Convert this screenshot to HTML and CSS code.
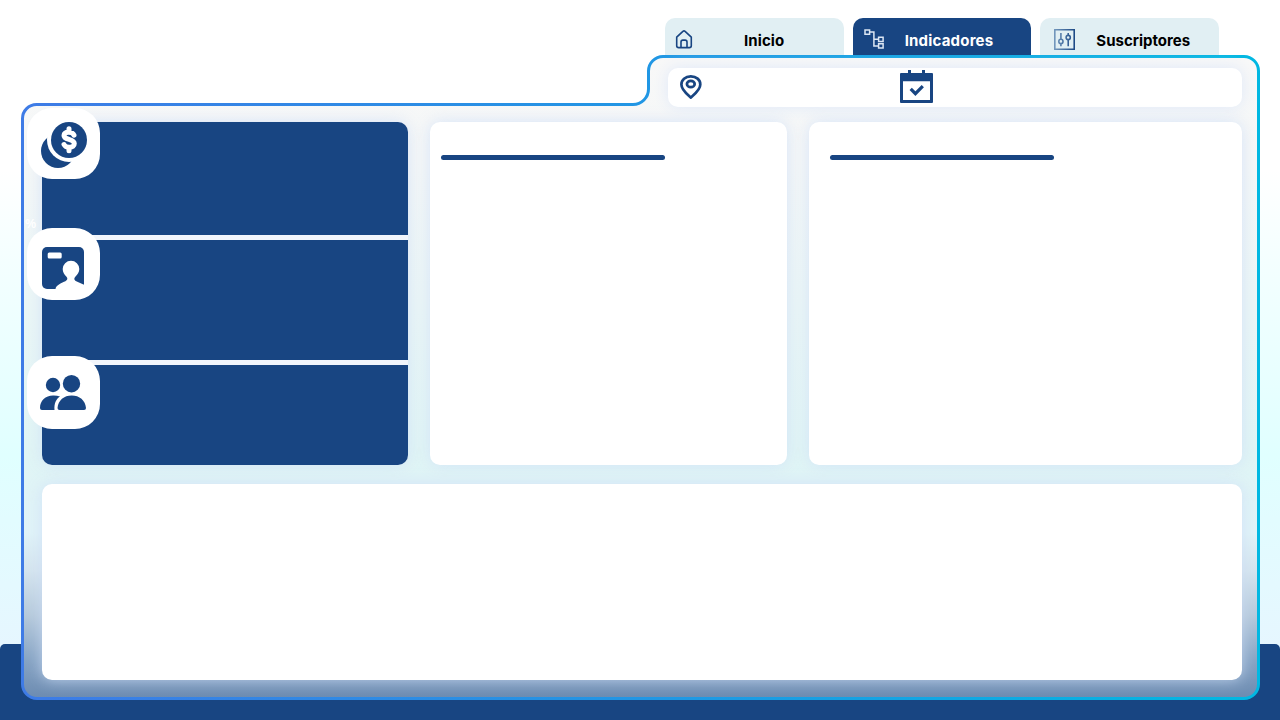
FILE: index.html
```
<!DOCTYPE html>
<html lang="es">
<head>
<meta charset="utf-8">
<title>Indicadores</title>
<link rel="stylesheet" href="styles.css">
</head>
<body>
<div class="page">
  <div class="footer-band"></div>
  <svg class="frame" width="1280" height="720" viewBox="0 0 1280 720" fill="none">
    <defs>
      <linearGradient id="edge" x1="21" y1="0" x2="1260" y2="0" gradientUnits="userSpaceOnUse">
        <stop offset="0" stop-color="#3e7be6"/><stop offset=".5" stop-color="#2196e4"/><stop offset="1" stop-color="#00b8e2"/>
      </linearGradient>
      <linearGradient id="glass" x1="0" y1="55" x2="0" y2="700" gradientUnits="userSpaceOnUse">
        <stop offset="0" stop-color="#f8f8f8"/><stop offset=".16" stop-color="#f5f7f7"/><stop offset=".62" stop-color="#e0f5f5"/><stop offset=".74" stop-color="#e0f3f8"/><stop offset=".8" stop-color="#d4e4ee"/><stop offset=".87" stop-color="#b5c9db"/><stop offset=".94" stop-color="#86a3c3"/><stop offset="1" stop-color="#6b8ab0"/>
      </linearGradient>
    </defs>
    <path d="M36.500 104.500H633a15.500 15.500 0 0 0 15.500-15.500V71a14.500 14.500 0 0 1 14.500-14.500H1244a14.500 14.500 0 0 1 14.500 14.500V684a14.500 14.500 0 0 1-14.500 14.500H37a14.500 14.500 0 0 1-14.500-14.500V118.500a14 14 0 0 1 14-14Z" fill="url(#glass)" stroke="url(#edge)" stroke-width="3"/>
  </svg>

  <nav class="tabs">
    <a class="tab">
      <svg class="tab-icon home" width="18" height="20" viewBox="0 0 18 20" fill="none" stroke="#184582" stroke-width="1.600" stroke-linejoin="round"><path d="M1.700 7.200 7.900 1.300Q9 .4 10.100 1.300L16.300 7.200V15.700Q16.300 17.600 14.300 17.600H3.700Q1.700 17.600 1.700 15.700Z"/><path d="M6 17.400V12Q6 10.100 7.900 10.100H10.100Q12 10.100 12 12V17.400"/></svg>
      <span class="label">Inicio</span>
    </a>
    <a class="tab active">
      <svg class="tab-icon tree" width="21" height="21" viewBox="0 0 21 21" fill="none" stroke="#dce6f3" stroke-width="1.500"><path d="M1 1.100h4.600v4.200H1ZM14.600 8.200h4.500v4.200h-4.500ZM14.600 14.800h4.500v4.200h-4.500ZM5.600 3.100h4.300v13.800h4.700M9.900 10.300h4.700"/></svg>
      <span class="label">Indicadores</span>
    </a>
    <a class="tab">
      <svg class="tab-icon sliders" width="22" height="22" viewBox="0 0 22 22" fill="none" stroke="url(#fade)" stroke-width="1.600">
        <defs><linearGradient id="fade" x1="0" y1="0" x2="22" y2="0" gradientUnits="userSpaceOnUse"><stop stop-color="#7398bd"/><stop offset="1" stop-color="#184582"/></linearGradient></defs>
        <path d="M.8 .8h19.400v19.400H.8ZM6.900 4v6.200M6.900 14.500V17.200M14.200 4v2.200M14.200 10.700v6.500"/><circle cx="6.900" cy="12.400" r="2.100"/><circle cx="14.200" cy="8.500" r="2.100"/>
      </svg>
      <span class="label">Suscriptores</span>
    </a>
  </nav>

  <div class="filters">
    <svg class="pin" width="22" height="24" viewBox="0 0 22 24" fill="none" stroke="#184582" stroke-width="2.700"><path d="M10.800 22.500C8.500 20.200 1.400 15.300 1.400 9.500 1.400 4.700 5.300 1.400 10.800 1.400S20.300 4.700 20.300 9.500C20.300 15.300 13.100 20.200 10.800 22.500Z"/><ellipse cx="10.800" cy="9" rx="3.900" ry="3.200"/></svg>
    <svg class="calendar" width="33" height="33" viewBox="0 0 33 33"><path fill="#184582" fill-rule="evenodd" d="M0 4Q0 3 1 3H8V0H11V3H22V0H25V3H32Q33 3 33 4V32Q33 33 32 33H1Q0 33 0 32ZM3 11.300V30H30V11.300Z"/><path d="m10.700 18.800 4.700 4.800 7.400-7.500" fill="none" stroke="#184582" stroke-width="3.200"/></svg>
  </div>

  <main class="content">
    <section class="metrics">
      <div class="metric first">
        <div class="badge coins"><svg width="46" height="46" viewBox="0 0 46 46"><circle cx="17" cy="29" r="17" fill="#184582"/><circle cx="28" cy="18" r="22" fill="#fff"/><circle cx="28" cy="18" r="18" fill="#184582"/><path d="M33 13.200C31.600 9.300 23.400 8.900 23 13.400 22.600 18.300 33.300 16.500 33.300 21.500 33.300 26.300 25 26.500 23 22.500M28 6.800V10M28 25.500V28.800" fill="none" stroke="#fff" stroke-width="5" stroke-linecap="round"/></svg></div>
        <span class="percent">%</span>
      </div>
      <div class="metric second">
        <div class="badge contact"><svg width="42" height="42" viewBox="0 0 42 42"><rect width="42" height="42" rx="5" fill="#184582"/><rect x="5.700" y="5.500" width="14" height="6" rx="1.500" fill="#fff"/><path d="M13.500 42C14 37.800 20 35.800 23.400 34.200 25.900 33 25.800 31.300 24.300 29.600 22.400 27.600 20.700 25.200 20.700 22A8.300 8.300 0 0 1 37.300 22C37.300 25.200 35.400 27.600 33.500 29.600 32 31.300 31.700 33 34.200 34.200L42 37.700V42Z" fill="#fff"/></svg></div>
      </div>
      <div class="metric third">
        <div class="badge people"><svg width="46" height="35" viewBox="0 0 46 35" fill="#184582"><circle cx="13" cy="10" r="7.200"/><circle cx="31.500" cy="8.700" r="8.700"/><path d="M2 35Q0 35 0 33C0 25.500 5.500 20.500 13 20.500Q17 20.400 20 21.500C16 24 14 28.500 14.500 35ZM19.500 35Q17.500 35 17.500 33C18.200 25.300 24 20.500 31.700 20.500S45.400 25.300 46 33Q46 35 44 35Z"/></svg></div>
      </div>
    </section>
    <section class="card"><div class="rule"></div></section>
    <section class="card wide"><div class="rule"></div></section>
    <section class="card bottom"></section>
  </main>
</div>
</body>
</html>
```
FILE: styles.css
```
* { box-sizing: border-box; }
body { margin: 0; font-family: Inter, "Noto Sans", sans-serif; }
.page {
  position: relative;
  isolation: isolate;
  width: 1280px;
  height: 720px;
  overflow: hidden;
  background: linear-gradient(180deg, #fff 0, #fff 170px, #f3ffff 270px, #e0ffff 455px, #e6f6ff 650px);
}
.footer-band {
  position: absolute;
  z-index: -2;
  left: 0; right: 0; bottom: 0;
  height: 76px;
  border-radius: 5px 5px 0 0;
  background: #184582;
}
.frame { position: absolute; z-index: -1; inset: 0; }

.tabs { display: flex; gap: 9px; height: 55px; padding: 18px 61px 0 665px; }
.tab {
  flex: 1;
  display: flex;
  align-items: flex-start;
  border-radius: 10px 10px 0 0;
  background: #e1eff3;
  color: #000;
}
.tab.active { background: #184582; color: #fff; }
.tab-icon { flex: none; }
.home { margin: 12px 0 0 10px; }
.tree { margin: 11px 0 0 11px; }
.sliders { margin: 11px 0 0 14px; }
.label {
  margin-top: 13px;
  font-size: 15px;
  line-height: 20px;
  font-weight: 700;
  letter-spacing: 0;
  white-space: nowrap;
}
.active .label { letter-spacing: .2px; }
.home + .label { margin-left: 51px; letter-spacing: .1px; }
.tree + .label { margin-left: 20px; }
.sliders + .label { margin-left: 20px; }

.filters {
  display: flex;
  gap: 198px;
  width: 574px;
  height: 39px;
  margin: 13px 0 15px 668px;
  padding-left: 12px;
  border-radius: 10px;
  background: #fff;
  box-shadow: 0 0 15px #dfe8f8;
}
.pin { margin-top: 7px; }
.calendar { margin-top: 2px; }

.content {
  display: grid;
  grid-template: 343px 196px / 366px 357px 433px;
  gap: 19px 22px;
  padding-left: 42px;
}
.card {
  padding: 33px 11px;
  border-radius: 10px;
  background: #fff;
  box-shadow: 0 0 15px rgba(206, 222, 248, .8);
}
.card.wide { padding-left: 21px; }
.card.bottom { grid-column: 1 / -1; }
.rule { width: 224px; height: 5px; border-radius: 3px; background: #184582; }

.metrics {
  display: grid;
  grid-template-rows: 113px 120px 100px;
  gap: 5px;
  border-radius: 10px;
  background: #f1f5fb;
  box-shadow: 0 0 15px rgba(206, 222, 248, .8);
}
.metric { position: relative; background: #184582; }
.first { border-radius: 0 10px 0 0; }
.third { border-radius: 0 0 10px 10px; }
.badge {
  position: absolute;
  left: -15px;
  width: 73px;
  height: 72px;
  border-radius: 25px;
  background: #fff;
}
.badge svg { display: block; }
.coins { top: -14px; height: 71px; padding: 14px 0 0 14px; }
.contact { top: -12px; padding: 18.500px 0 0 15px; }
.people { top: -9px; height: 73px; padding: 19px 0 0 13px; }
.percent {
  position: absolute;
  left: -17px;
  top: 92px;
  color: #fff;
  font: 600 13px/18px "Open Sans", sans-serif;
}
```
